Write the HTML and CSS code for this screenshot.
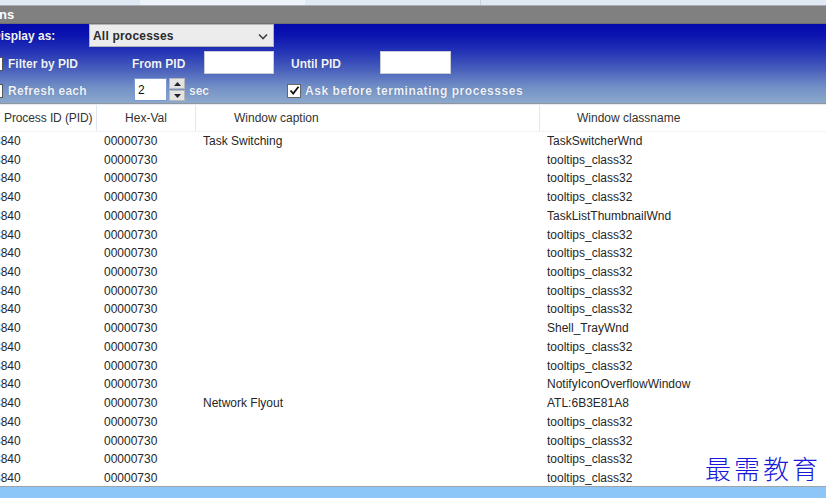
FILE: index.html
```html
<!DOCTYPE html>
<html lang="en">

<head>
    <meta charset="UTF-8">
    <meta name="viewport" content="width=device-width, initial-scale=1.0">
    <title>Options</title>
    <link rel="stylesheet" href="styles.css">
</head>

<body>
    <!-- top strip -->
    <div class="topstrip">
        <div class="strip-a"></div>
        <div class="strip-b"></div>
        <div class="strip-c"></div>
    </div>

    <!-- title -->
    <div class="titlebar"><span class="title-text">Options</span></div>

    <!-- options panel -->
    <section class="panel">
        <div class="prow">
            <label class="lbl lbl-display">Display as:</label>
            <div class="select">
                <span>All processes</span>
                <svg width="10" height="7" viewBox="0 0 10 7"><path d="M1 1.5 L5 5.5 L9 1.5" fill="none" stroke="#444" stroke-width="1.6"/></svg>
            </div>
        </div>
        <div class="prow">
            <div class="chk-wrap w-filter">
                <span class="chk cut"></span>
                <label class="lbl">Filter by PID</label>
            </div>
            <label class="lbl w-from">From PID</label>
            <div class="field w-field"></div>
            <label class="lbl w-until">Until PID</label>
            <div class="field w-field2"></div>
        </div>
        <div class="prow">
            <div class="chk-wrap w-refresh">
                <span class="chk cut"></span>
                <label class="lbl">Refresh each</label>
            </div>
            <div class="field spin-field">2</div>
            <div class="spin">
                <div class="spin-btn"><svg width="7" height="4" viewBox="0 0 7 4"><path d="M0 4 L3.5 0 L7 4Z" fill="#222"/></svg></div>
                <div class="spin-btn"><svg width="7" height="4" viewBox="0 0 7 4"><path d="M0 0 L3.5 4 L7 0Z" fill="#222"/></svg></div>
            </div>
            <label class="lbl w-sec">sec</label>
            <div class="chk-wrap gap-ask">
                <span class="chk checked"><svg width="11" height="11" viewBox="0 0 11 11"><path d="M1.5 5.5 L4.2 8.5 L9.5 1.8" fill="none" stroke="#111" stroke-width="1.8"/></svg></span>
                <label class="lbl lbl-ask">Ask before terminating processses</label>
            </div>
        </div>
    </section>

    <!-- list -->
    <section class="list">
        <div class="head">
            <div class="hcell c1">Process ID (PID)</div>
            <div class="hcell c2">Hex-Val</div>
            <div class="hcell c3">Window caption</div>
            <div class="hcell c4">Window classname</div>
        </div>
        <div id="rows"></div>
    </section>

    <div class="bottombar"></div>

    <div class="stamp">最需教育</div>

    <script>
        const data = [
            ['Task Switching', 'TaskSwitcherWnd'],
            ['', 'tooltips_class32'],
            ['', 'tooltips_class32'],
            ['', 'tooltips_class32'],
            ['', 'TaskListThumbnailWnd'],
            ['', 'tooltips_class32'],
            ['', 'tooltips_class32'],
            ['', 'tooltips_class32'],
            ['', 'tooltips_class32'],
            ['', 'tooltips_class32'],
            ['', 'Shell_TrayWnd'],
            ['', 'tooltips_class32'],
            ['', 'tooltips_class32'],
            ['', 'NotifyIconOverflowWindow'],
            ['Network Flyout', 'ATL:6B3E81A8'],
            ['', 'tooltips_class32'],
            ['', 'tooltips_class32'],
            ['', 'tooltips_class32'],
            ['', 'tooltips_class32']
        ];
        const rows = document.getElementById('rows');
        data.forEach(d => {
            const row = document.createElement('div');
            row.className = 'row';
            row.innerHTML = `<div class="cell c1"><span class="pid">3840</span></div>
                <div class="cell c2">00000730</div>
                <div class="cell c3">${d[0]}</div>
                <div class="cell c4">${d[1]}</div>`;
            rows.appendChild(row);
        });
    </script>
</body>

</html>
```
FILE: styles.css
```css
html,
body {
    padding: 0;
    margin: 0;
}

body {
    width: 826px;
    height: 498px;
    overflow: hidden;
    background: #fff;
    font-family: "Liberation Sans", Arial, sans-serif;
    font-size: 12px;
    position: relative;
}

/* top strip */
.topstrip {
    height: 5px;
    display: flex;
    background: #dfe8f3;
    border-bottom: 1px solid #a9adb3;
}
.strip-a {
    width: 140px;
}
.strip-b {
    width: 165px;
    background: #eef3fa;
}
.strip-c {
    width: 175px;
    border-right: 1px solid #c8d0da;
}

/* title */
.titlebar {
    height: 17px;
    background: #808080;
    border-bottom: 1px solid #6e6e6e;
    overflow: hidden;
    line-height: 17px;
}
.title-text {
    display: inline-block;
    margin-left: -35px;
    color: #fff;
    font-weight: bold;
    font-size: 13px;
}

/* options panel */
.panel {
    height: 79px;
    background: linear-gradient(#0509ac 0%, #0c14b0 15%, #2434b6 35%, #4a60bc 58%, #7290c6 80%, #8ca8cc 100%);
    border-bottom: 1px solid #8f959c;
    display: flex;
    flex-direction: column;
    gap: 4px;
}

.prow {
    height: 23px;
    display: flex;
    align-items: center;
}

.lbl {
    color: #eef2fa;
    font-weight: bold;
    font-size: 12px;
    text-shadow: 0 0 1px rgba(0, 0, 40, 0.35);
    white-space: nowrap;
    padding-top: 2px;
}

.lbl-display {
    margin-left: -8px;
    flex: none;
    width: 97px;
    padding-top: 1px;
}

.select {
    width: 185px;
    height: 23px;
    box-sizing: border-box;
    background: #ececec;
    border: 1px solid #b4b4b4;
    display: flex;
    align-items: center;
    justify-content: space-between;
    padding: 1px 5px 0 3px;
    font-weight: bold;
    color: #2a2a2a;
    letter-spacing: 0.2px;
}

.chk-wrap {
    display: flex;
    align-items: center;
    gap: 5px;
    flex: none;
}
.chk {
    width: 12px;
    height: 12px;
    background: #fff;
    border: 1px solid #555;
    display: flex;
    align-items: center;
    justify-content: center;
    margin-top: 2px;
}
.chk.cut {
    margin-left: -11px;
}

.w-filter {
    width: 132px;
}
.w-from {
    width: 72px;
}
.field {
    height: 23px;
    box-sizing: border-box;
    background: #fff;
    border: 1px solid #c6cbd4;
}
.w-field {
    width: 70px;
    margin-right: 17px;
}
.w-until {
    width: 89px;
}
.w-field2 {
    width: 71px;
}

.w-refresh {
    width: 134px;
}
.w-refresh .lbl {
    letter-spacing: 0.3px;
}
.spin-field {
    width: 33px;
    padding-left: 3px;
    padding-top: 1px;
    line-height: 21px;
    color: #111;
    font-size: 12px;
    border-color: #7a9ad0;
}
.spin {
    width: 16px;
    height: 23px;
    margin-left: 2px;
    display: flex;
    flex-direction: column;
    gap: 1px;
}
.spin-btn {
    flex: 1;
    background: #e4e4e4;
    border: 1px solid #b8b8b8;
    display: flex;
    align-items: center;
    justify-content: center;
}
.w-sec {
    width: 99px;
    margin-left: 4px;
}

.gap-ask {
    gap: 4px;
    margin-left: -1px;
}
.lbl-ask {
    letter-spacing: 0.55px;
}

.chk.checked {
    width: 12px;
    height: 12px;
    border-color: #666;
}

/* list */
.list {
    border-top: 1px solid #e6ebf1;
}
.head {
    height: 26px;
    display: grid;
    grid-template-columns: 97px 99px 344px 1fr;
    border-bottom: 1px solid #f0f3f7;
}
.hcell {
    color: #333;
    line-height: 26px;
    border-right: 1px solid #e0e7ef;
    white-space: nowrap;
    overflow: hidden;
}
.hcell.c1 {
    padding-left: 4px;
    letter-spacing: -0.1px;
}
.hcell.c2 {
    text-align: center;
}
.hcell.c3 {
    padding-left: 38px;
}
.hcell.c4 {
    padding-left: 37px;
    border-right: none;
}

.row {
    height: 18.72px;
    display: grid;
    grid-template-columns: 97px 99px 344px 1fr;
    line-height: 18.72px;
    color: #262626;
}
.cell {
    white-space: nowrap;
    overflow: hidden;
}
.pid {
    margin-left: -6px;
}
.row .c2,
.row .c3,
.row .c4 {
    padding-left: 7px;
}

.bottombar {
    position: absolute;
    left: 0;
    right: 0;
    bottom: 0;
    height: 11px;
    background: #8cc6f8;
    border-top: 1px solid #9ea4aa;
}

.stamp {
    position: absolute;
    left: 705px;
    top: 449px;
    font-family: "Noto Sans CJK SC", sans-serif;
    font-weight: 300;
    font-size: 26px;
    letter-spacing: 3px;
    color: #1818d8;
}
```
